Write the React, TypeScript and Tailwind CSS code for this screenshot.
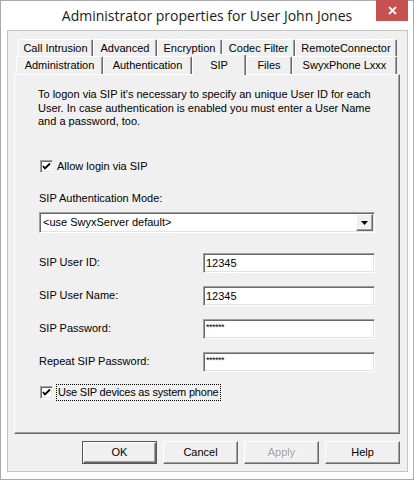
import { ReactNode } from 'react'

const raised = 'border border-t-white border-l-white border-r-[#696969] border-b-[#696969] shadow-[inset_-1px_-1px_0_#a0a0a0]'
const sunken = 'border border-t-[#a0a0a0] border-l-[#a0a0a0] border-r-white border-b-white shadow-[inset_1px_1px_0_#696969,inset_-1px_-1px_0_#e3e3e3]'

interface TabProps {
  label: string
  width: number
  selected?: boolean
}

function Tab({ label, width, selected }: TabProps) {
  return (
    <div
      style={{ width }}
      className={
        selected
          ? 'relative z-10 -mt-[2px] -mb-[1px] flex items-start justify-center pt-[2px] h-[21px] rounded-t-[2px] bg-[#f0f0f0] border-t border-l border-r border-t-white border-l-white border-r-[#696969] shadow-[inset_-1px_0_0_#a0a0a0]'
          : 'flex items-center justify-center h-full rounded-t-[2px] bg-[#f0f0f0] border-t border-l border-r border-t-white border-l-white border-r-[#696969] shadow-[inset_-1px_0_0_#a0a0a0]'
      }
    >
      {label}
    </div>
  )
}

function CheckBox() {
  return (
    <div className={`w-[13px] h-[13px] bg-white ${sunken} flex items-center justify-center`}>
      <svg width="9" height="9" viewBox="0 0 9 9">
        <path d="M1 4 L3 6.5 L8 1.5" stroke="#000" strokeWidth="1.8" fill="none" />
      </svg>
    </div>
  )
}

function Field({ label, value }: { label: string; value: ReactNode }) {
  return (
    <div className="flex items-center h-[20px]">
      <div className="w-[164px] pb-[2px]">{label}</div>
      <div className={`w-[172px] h-[20px] bg-white ${sunken} flex items-center pl-[2px]`}>{value}</div>
    </div>
  )
}

function Stars() {
  return <span className="text-[9px] tracking-[-0.5px] leading-none -mt-[4px]">******</span>
}

function DialogButton({ label, isDefault, disabled }: { label: string; isDefault?: boolean; disabled?: boolean }) {
  return (
    <div
      className={
        isDefault
          ? 'w-[75px] h-[23px] flex items-center justify-center bg-[#f0f0f0] border border-[#555] shadow-[inset_1px_1px_0_#fff,inset_-1px_-1px_0_#696969,inset_-2px_-2px_0_#a0a0a0]'
          : `w-[75px] h-[23px] flex items-center justify-center bg-[#f0f0f0] ${raised}`
      }
    >
      <span className={disabled ? 'text-[#a0a0a0] [text-shadow:1px_1px_0_#fff]' : ''}>{label}</span>
    </div>
  )
}

export default function App() {
  return (
    <div className="w-[414px] h-[480px] bg-white border border-[#aaaaaa] flex flex-col text-black font-['Liberation_Sans',Arial,sans-serif] text-[11px]">
      <div className="relative h-[29px] flex items-center justify-center">
        <div className="font-['Open_Sans',sans-serif] text-[14px] text-[#1a1a1a] pb-[1px]">
          Administrator properties for User John Jones
        </div>
        <div className="absolute top-[-1px] right-[5px] w-[32px] h-[21px] bg-[#c75050] flex items-center justify-center">
          <svg width="9" height="9" viewBox="0 0 9 9">
            <path d="M1 1 L8 8 M8 1 L1 8" stroke="#fff" strokeWidth="1.8" />
          </svg>
        </div>
      </div>

      <div className="ml-[6px] mr-[5px] mb-[7px] flex-1 bg-[#f0f0f0] border border-[#c4c4c4] flex flex-col pt-[8px] pl-[6px] pr-[7px] pb-[6px]">
        <div className="flex h-[17px] pl-[4px]">
          <Tab label="Call Intrusion" width={75} />
          <Tab label="Advanced" width={64} />
          <Tab label="Encryption" width={65} />
          <Tab label="Codec Filter" width={73} />
          <Tab label="RemoteConnector" width={102} />
        </div>
        <div className="flex h-[18px] pl-[2px]">
          <Tab label="Administration" width={87} />
          <Tab label="Authentication" width={89} />
          <Tab label="SIP" width={54} selected />
          <Tab label="Files" width={46} />
          <Tab label="SwyxPhone Lxxx" width={105} />
        </div>

        <div className="h-[360px] bg-[#f0f0f0] border border-t-white border-l-white border-r-[#696969] border-b-[#696969] shadow-[inset_-1px_-1px_0_#a0a0a0] flex flex-col pl-[24px] pt-[13px]">
          <p className="h-[41px] leading-[13.5px] w-[340px] -ml-[1px]">
            To logon via SIP it&apos;s necessary to specify an unique User ID for each User. In case authentication is enabled you must enter a User Name and a password, too.
          </p>

          <div className="mt-[31px] h-[13px] flex items-center gap-[4px] ml-[1px]">
            <CheckBox />
            <span>Allow login via SIP</span>
          </div>

          <div className="mt-[18px] h-[14px] flex items-center">SIP Authentication Mode:</div>

          <div className={`mt-[7px] w-[336px] h-[21px] bg-white ${sunken} flex items-center justify-between pl-[3px] pr-[1px]`}>
            <span>&lt;use SwyxServer default&gt;</span>
            <div className={`w-[17px] h-[17px] bg-[#f0f0f0] ${raised} flex items-center justify-center`}>
              <svg width="7" height="4" viewBox="0 0 7 4">
                <path d="M0 0 H7 L3.5 4 Z" fill="#000" />
              </svg>
            </div>
          </div>

          <div className="mt-[20px] flex flex-col gap-[13px]">
            <Field label="SIP User ID:" value="12345" />
            <Field label="SIP User Name:" value="12345" />
            <Field label="SIP Password:" value={<Stars />} />
            <Field label="Repeat SIP Password:" value={<Stars />} />
          </div>

          <div className="mt-[14px] h-[13px] flex items-center gap-[3px] ml-[1px]">
            <CheckBox />
            <span className="leading-[13px] tracking-[-0.2px] px-[1px] py-[1px] border border-dotted border-black">Use SIP devices as system phone</span>
          </div>
        </div>

        <div className="mt-[7px] flex justify-end gap-[6px]">
          <DialogButton label="OK" isDefault />
          <DialogButton label="Cancel" />
          <DialogButton label="Apply" disabled />
          <DialogButton label="Help" />
        </div>
      </div>
    </div>
  )
}
